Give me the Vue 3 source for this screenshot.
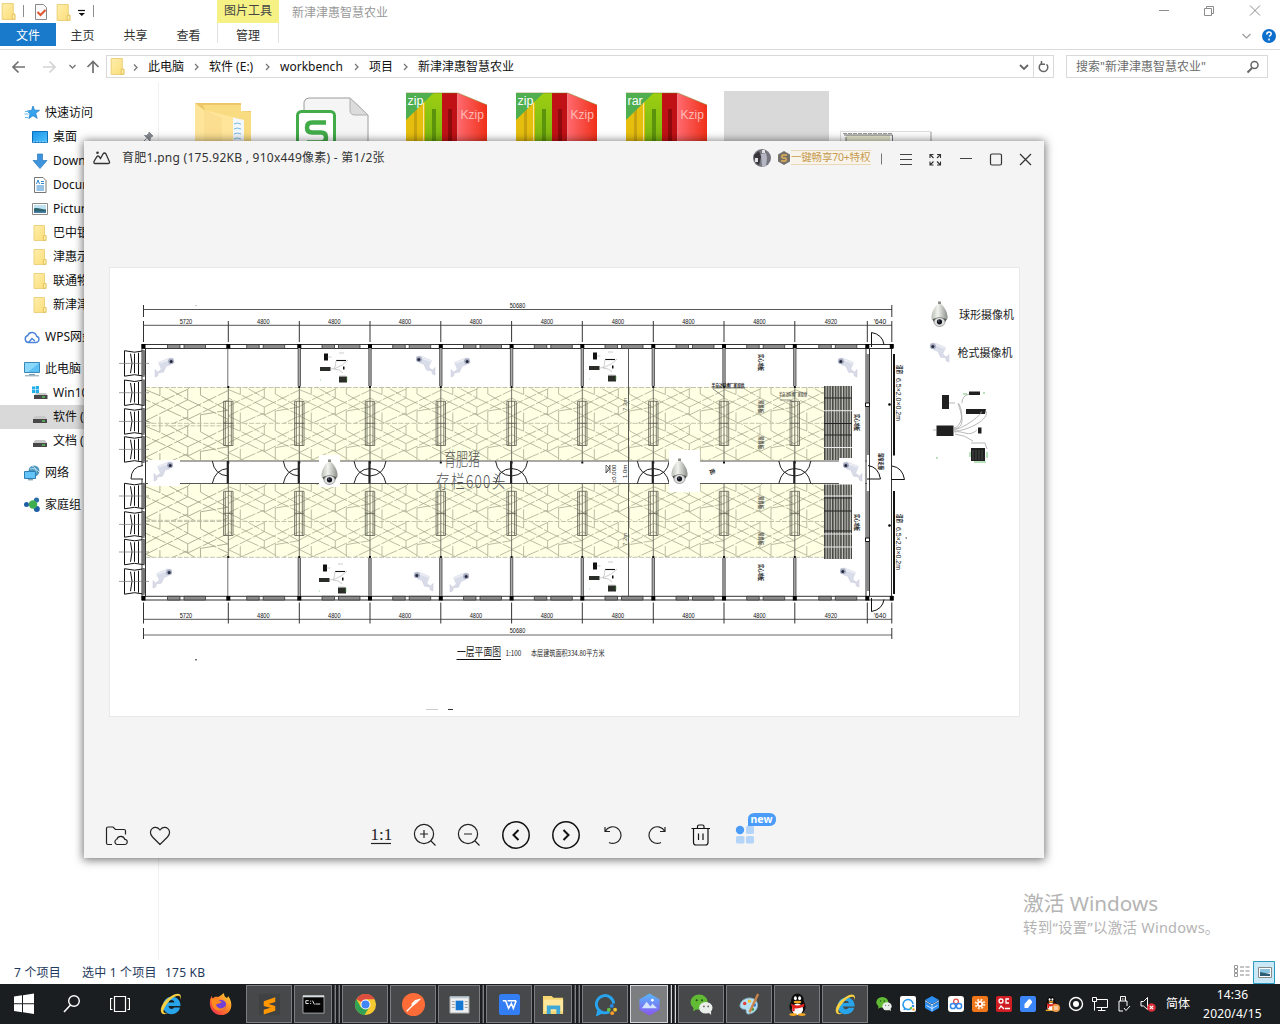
<script setup>
const navItems = [
  { icon: 'star', text: '快速访问', top: true },
  { icon: 'desk', text: '桌面', pin: true },
  { icon: 'down', text: 'Downloads' },
  { icon: 'docu', text: 'Documents' },
  { icon: 'pict', text: 'Pictures' },
  { icon: 'folder', text: '巴中银行' },
  { icon: 'folder', text: '津惠示范' },
  { icon: 'folder', text: '联通物联' },
  { icon: 'folder', text: '新津津惠' },
  { icon: 'cloud', text: 'WPS网盘', top: true, gap: true },
  { icon: 'pc', text: '此电脑', top: true, gap: true },
  { icon: 'win', text: 'Win10 (C:)' },
  { icon: 'drive', text: '软件 (E:)', sel: true },
  { icon: 'drive', text: '文档 (F:)' },
  { icon: 'net', text: '网络', top: true, gap: true },
  { icon: 'home', text: '家庭组', top: true, gap: true },
]
const crumbs = [
  { t: '此电脑', w: 61 },
  { t: '软件 (E:)', w: 71 },
  { t: 'workbench', w: 89 },
  { t: '项目', w: 49 },
  { t: '新津津惠智慧农业', w: 110 },
]
const archives = ['zip', 'zip', 'rar']

const cols = [143.5, 228.3, 299.3, 370, 440.8, 511.6, 582.3, 653.3, 724, 794.8, 867.3, 891.8]
const dims = [
  [186, '5720'], [263.3, '4800'], [334.3, '4800'], [405, '4800'], [476, '4800'], [547, '4800'],
  [618, '4800'], [688.5, '4800'], [759.5, '4800'], [831, '4920'], [880, "'640"],
]
const inner = cols.slice(1, 10)
const wallWins = cols.slice(0, 10).flatMap((x, i) => {
  const o = i === 0 || i === 9 ? 24 : i === 1 ? 18.4 : 22.7
  return [[x + o, 12.5], [x + o + 16.5, 21.5]]
})
const fans = [350.7, 380, 408.7, 436.7, 483.3, 511.7, 539.3, 568.7]
const doors = [[228.3, 0], [299.3, 0], [370, 1], [511.6, 1], [653.3, 1], [794.8, 1]]
const guns = [
  [164, 367, 1], [163, 471, 1], [162, 578, 1], [460, 367, 1], [459, 582, 1],
  [426, 365, -1], [848, 367, -1], [853, 471, -1], [424, 581, -1], [850, 577, -1], [940, 352, -1],
]
const domes = [[329.5, 472], [679.5, 471], [939.5, 314]]
const kits = [[334, 367], [603, 366], [333, 578], [603, 576]]
const meshes = []
cols.slice(0, 10).forEach((x, i) => {
  const end = i === 9 ? 824 : cols[i + 1]
  const start = i === 0 ? 146 : x
  for (const y of [387, 423.6, 484, 520.6]) meshes.push({ x: start, y, w: end - start, h: 36.6 })
})
const slab = [[761, 354], [761, 564], [857, 414], [857, 514]]
const slat = [[761, 400], [761, 436], [761, 496], [761, 532]]

const tasks = [
  { i: 'sublime' }, { i: 'cmd', n: 2 }, { i: 'chrome' }, { i: 'postman' }, { i: 'appwin', n: 1 }, { i: 'wps' },
  { i: 'files', n: 2 }, { i: 'wecom' }, { i: 'viewer', n: 2, on: true }, { i: 'wechat' }, { i: 'paint' }, { i: 'qq' }, { i: 'ie' },
]
const tray = ['wechat', 'tq', 'tstack', 'tcloud', 'tgear', 'tred', 'tblue', 'qq', 'trec', 'tnet', 'tusb', 'tmute']
</script>

<template>
  <div class="screen">
    <svg class="defs" width="0" height="0">
      <defs>
        <linearGradient id="gf" x1="0" y1="0" x2="1" y2="1"><stop offset="0" stop-color="#ffefac" /><stop offset="1" stop-color="#fbdc78" /></linearGradient>
        <linearGradient id="gb" x1="0" y1="0" x2="1" y2="1"><stop offset="0" stop-color="#1a92e8" /><stop offset="1" stop-color="#4fc3fb" /></linearGradient>
        <linearGradient id="gr" x1="0" x2="1"><stop offset="0" stop-color="#ff6a70" /><stop offset="1" stop-color="#f03018" /></linearGradient>
        <linearGradient id="gg" x1="0" y1="0" x2="0" y2="1"><stop offset="0" stop-color="#9ccf12" /><stop offset="1" stop-color="#76b010" /></linearGradient>
        <linearGradient id="gv" x1="0" y1="0" x2="0" y2="1"><stop offset="0" stop-color="#58b8fb" /><stop offset="1" stop-color="#8a55f0" /></linearGradient>
        <linearGradient id="gd" x1="0" x2="1"><stop offset="0" stop-color="#b9bcb5" /><stop offset=".4" stop-color="#f2f3ee" /><stop offset="1" stop-color="#8b8e88" /></linearGradient>
        <linearGradient id="gff" x1="1" y1="0" x2="0" y2="1"><stop offset="0" stop-color="#ffe03a" /><stop offset=".5" stop-color="#ff7a25" /><stop offset="1" stop-color="#f0205a" /></linearGradient>
      </defs>
      <symbol id="folder" viewBox="0 0 16 16"><path d="M2 .5h10.500v10l1.500 0v5H2z" fill="url(#gf)" stroke="#e9ca6d" stroke-width=".8" /><path d="M11.500 10.500h2.500v4.800h-2.500z" fill="#fff0ae" stroke="#e0bd55" stroke-width=".8" /></symbol>
      <symbol id="star" viewBox="0 0 16 16"><path d="M9 1l1.600 4.200 4.900.1-3.800 3 1.500 5-4.200-2.600-4.200 2.900 1.300-4.900L3 6l4.500-.6z" fill="#35a3ee" stroke="#1878c8" stroke-width=".7" /><path d="M1 6.500h4M.5 9h4M1 12.500h3" stroke="#62b8f2" stroke-width="1" /></symbol>
      <symbol id="desk" viewBox="0 0 16 16"><path d="M.5 2.500h15v11H.5z" fill="url(#gb)" stroke="#0e6fb8" /><path d="M1 12.800h14" stroke="#8bd2fb" stroke-dasharray="2 1" /></symbol>
      <symbol id="down" viewBox="0 0 16 16"><path d="M5.500 1h5v6.500h4.500L8 15.500 1 7.500h4.500z" fill="#3d94dc" stroke="#2a78ba" stroke-width=".7" /></symbol>
      <symbol id="docu" viewBox="0 0 16 16"><path d="M2.500.5h8.500l3 3v12H2.500z" fill="#fff" stroke="#777" /><path d="M9 4.500h3M9 6.500h3M4.500 9h7.500M4.500 11h7.500M4.500 13h7.500M4.500 7l1.500-4 1.500 4" stroke="#2f86cc" fill="none" /></symbol>
      <symbol id="pict" viewBox="0 0 16 16"><path d="M.5 2.500h15v11H.5z" fill="#fff" stroke="#8a8a8a" /><path d="M2 4h12v8H2z" fill="#bfe2f3" /><path d="M2 7.500c4-1.500 7 1 12 1V12H2z" fill="#2c6470" /><path d="M2 10.500h12V12H2z" fill="#4a7fa8" /></symbol>
      <symbol id="cloud" viewBox="0 0 16 16"><path d="M4.500 13.500h7.500a3.200 3.200 0 0 0 .5-6.300A4.600 4.600 0 0 0 3.700 6.500 3.600 3.600 0 0 0 4.500 13.500l3.500-4 3 2.500" fill="none" stroke="#4a83d8" stroke-width="1.400" /></symbol>
      <symbol id="pc" viewBox="0 0 16 16"><path d="M.5 1.500h15v10H.5z" fill="#5cc0f5" stroke="#3b87b5" /><path d="M1 2h14L4 11H1z" fill="#8cd8fb" /><path d="M5 13.500h6M1 14.800h14" stroke="#7c9cae" /></symbol>
      <symbol id="drive" viewBox="0 0 16 16"><path d="M3 7h10l2 3H1z" fill="#c8c8c8" /><path d="M1 10h14v4H1z" fill="#484848" /><path d="M10 12h3" stroke="#5fe05f" stroke-width="1.200" /></symbol>
      <symbol id="win" viewBox="0 0 16 16"><path d="M0 1.500h3v3H0zM3.600 1h3.400v3.500H3.600zM0 5h3v3H0zM3.600 5H7v3.500H3.600z" fill="#22aee8" /><path d="M5 8h9l1.500 2.500H2z" fill="#c8c8c8" /><path d="M2 10h13.500v4H2z" fill="#484848" /><path d="M10 12h3" stroke="#5fe05f" stroke-width="1.200" /></symbol>
      <symbol id="net" viewBox="0 0 16 16"><circle cx="10" cy="6" r="5.500" fill="#4a95bd" /><path d="M8 1c4 1 5 5 3 9M6 4c4-1 7 0 9 3" stroke="#c4e6f5" fill="none" /><path d="M.5 6.500h11v7H.5z" fill="#62c4f8" stroke="#2f7fb4" /><path d="M4 14.800h5" stroke="#5b7f95" /></symbol>
      <symbol id="home" viewBox="0 0 16 16"><circle cx="2.500" cy="7.500" r="2.500" fill="#1c5fa4" /><circle cx="12.500" cy="3" r="2.600" fill="#2b6cab" /><circle cx="12.800" cy="12" r="3" fill="#1c5fa4" /><circle cx="9" cy="7.500" r="4.200" fill="#3fae4e" /></symbol>

      <symbol id="gun" viewBox="-12 -12 24 24" overflow="visible"><path d="M-9 2.500v7.500l2.600-1 .8-3.200 5-.6 2.400-5.400-2.500-1L-4 3.500-6.500 5z" fill="#dadbe8" stroke="#c5c7d8" stroke-width=".5" /><path d="M-5.500-4.500L5-9l4.500.5.2 4.200L-3 1.500z" fill="#eceef6" stroke="#d0d2df" stroke-width=".5" /><path d="M-3 1.500L7-2 6-7-5-3z" fill="#d9dce9" /><circle cx="7" cy="-5.800" r="2.900" fill="#a6abc0" /><circle cx="7.200" cy="-5.500" r="1.500" fill="#23283a" /></symbol>
      <symbol id="dome" viewBox="-10 -14 20 28" overflow="visible"><path d="M-1.500-12.500h3v3h-3z" fill="#8c8f88" /><path d="M-1.500-10C-6-6-8.500 0-8 4.500-7 9 7 9 8 4.500 8.500 0 6-6 1.500-10z" fill="url(#gd)" /><path d="M-7 5.500C-5 3 5 3 7 5.500L5.500 8H-5.500z" fill="#50544f" /><ellipse cx="0" cy="8" rx="5.500" ry="4.500" fill="#dedfe0" stroke="#777" stroke-width=".6" /><circle cx="0" cy="7.800" r="2.600" fill="#15171d" /><circle cx="-.7" cy="7" r=".6" fill="#aebbe8" /></symbol>
      <symbol id="kit" viewBox="-15 -15 30 30" overflow="visible"><path d="M-10-13.500h4v7h-4z" fill="#111" /><path d="M-14 0h10.500v4H-14zM5 9.500h8v6H5z" fill="#2a2c28" /><path d="M9-.5h1.500v3H9z" fill="#111" /><path d="M2-6.500h10" stroke="#111" stroke-width="1.100" fill="none" /><path d="M-6.500-10h4M-3 2C4 2 0-6 3-7M14-7Q10-2 0 2q6 0 9 4M5 9h7M5-14h5" stroke="#999" stroke-width=".5" fill="none" /><path d="M13 10v4M-14 13h1" stroke="#5ab860" stroke-width=".6" /></symbol>

      <symbol id="ie" viewBox="0 0 24 24"><path d="M21 15.500h-6c-.5 2-5 2.300-5.500-1.500h12c.5-12-17-12.500-17.500-.5 0 11 15 11.500 17 2zM9.500 10.500c.5-3.300 5.500-3.300 6 0z" fill="#28a5ea" fill-rule="evenodd" /><path d="M21.500 8c2-7-3-8-9-4C3 9-1 20 4 22c2 .5 4-.5 5.500-1.500-6 2.500-6.500-2-2-8 4-5.500 8-8.500 11.500-8.700 2.200 0 2.800 1.500 2.500 4.200z" fill="#f6cf45" /></symbol>
      <symbol id="firefox" viewBox="0 0 24 24"><path d="M15 1c0 3 1 4 3 5 1-1 1-2 1-2 6 7 4 19-7 19C4 23 0 16 1 9c0-2 1-4 2-5 0 1 0 2 1 2.500C6 4 8 5 9 5c3-1 4-3 6-4z" fill="url(#gff)" /><circle cx="12" cy="13" r="5.200" fill="#7540d8" /><path d="M2 7c6-1 8 2 11 3-2 2-5 1-6 3 2 5 8 4 10 0 0 7-12 8-14 0z" fill="#ff8a20" /></symbol>
      <symbol id="sublime" viewBox="0 0 24 24"><path d="M1 1h22v22H1z" fill="#404142" /><path d="M6 8.500l12-4v5l-7 2 7 2v5l-12 4v-5l7-2-7-2z" fill="#ff9800" /></symbol>
      <symbol id="cmd" viewBox="0 0 24 24"><path d="M1 3h22v18H1z" fill="#050505" stroke="#a5a9ad" /><path d="M1 3.500h22" stroke="#d8dcdf" stroke-width="2" /><path d="M7 8H4v3h3M9 8v1M9 10.500v1M11 8l2 4M14 11.500h5" stroke="#eee" fill="none" /></symbol>
      <symbol id="chrome" viewBox="0 0 24 24"><circle cx="12" cy="12" r="11" fill="#f6c931" /><path d="M12 12L2.500 6.500A11 11 0 0 1 21.600 6.500H12z" fill="#dd4d40" /><path d="M12 12L7 14.500 2.500 6.500a11 11 0 0 0 8.500 16.500l5-8.500z" fill="#2fa253" /><circle cx="12" cy="12" r="5.200" fill="#fff" /><circle cx="12" cy="12" r="4.200" fill="#4285f4" /></symbol>
      <symbol id="postman" viewBox="0 0 24 24"><circle cx="12" cy="12" r="12" fill="#ff6c37" /><path d="M5 19l9-9 4-3M9 15l6-5 3-3-4 1-4 4" stroke="#fff" stroke-width="1.300" fill="none" /></symbol>
      <symbol id="appwin" viewBox="0 0 24 24"><path d="M2 4h20v17H2z" fill="#f0f0f0" stroke="#999" /><path d="M2 4.500h20" stroke="#b9c8d2" stroke-width="2" /><path d="M8 8h8v10H8z" fill="#1577d2" /><path d="M4 9h3M4 12h3M4 15h3M17.500 9h3M17.500 12h3M17.500 15h3" stroke="#999" /></symbol>
      <symbol id="wps" viewBox="0 0 24 24"><rect x="1" y="1" width="22" height="22" rx="3" fill="#347ef5" /><path d="M5 8h3l3 8 3-5 2 5 3-8M10 8h9" stroke="#fff" stroke-width="1.600" fill="none" /></symbol>
      <symbol id="files" viewBox="0 0 24 24"><path d="M1 3h9l2 2h10v17H1z" fill="#f6d673" /><path d="M2 7h20v12H2z" fill="#ffe79b" /><path d="M5 22v-9h14v9h-4v-5H9v5z" fill="#3ea9d8" /></symbol>
      <symbol id="wecom" viewBox="0 0 24 24"><path d="M16 19.500A9 9 0 1 1 20.500 11M5 18l-1 4 4-2" stroke="#28a4ee" stroke-width="3" fill="none" /><circle cx="18.500" cy="13.500" r="2" fill="#2d8bea" /><circle cx="15.500" cy="17.500" r="2" fill="#67c344" /><circle cx="19" cy="21" r="2" fill="#fb9a2c" /><circle cx="22" cy="17.500" r="2" fill="#f5c52e" /></symbol>
      <symbol id="viewer" viewBox="0 0 24 24"><path d="M12 .5l10.500 6v11L12 23.500l-10.500-6v-11z" fill="url(#gv)" /><path d="M4 16l5-7 4 5 2-3 5 5z" fill="#d4e6ff" /><circle cx="15" cy="7.500" r="1.400" fill="#fff" /></symbol>
      <symbol id="wechat" viewBox="0 0 24 24"><ellipse cx="9.500" cy="9.500" rx="9" ry="8" fill="#62bb35" /><path d="M4 15l-1 4 5-2.500" fill="#62bb35" /><ellipse cx="16.500" cy="15.500" rx="7" ry="6" fill="#e9eeea" /><path d="M19 20l3 3v-4" fill="#e9eeea" /><circle cx="7" cy="7.500" r="1.100" fill="#254d17" /><circle cx="12.500" cy="7.500" r="1.100" fill="#254d17" /><circle cx="14.500" cy="14" r=".9" fill="#666" /><circle cx="19" cy="14" r=".9" fill="#666" /></symbol>
      <symbol id="paint" viewBox="0 0 24 24"><path d="M2 13C3 6 12 3 18 7c5 5 2 14-7 15-4 0-1-5-4-5-2 0-5-1-5-4z" fill="#b5dff3" stroke="#7ea8bd" /><circle cx="7" cy="11" r="1.800" fill="#e04038" /><circle cx="12" cy="8.500" r="1.800" fill="#f0bf30" /><circle cx="15" cy="17" r="1.800" fill="#43a047" /><circle cx="17" cy="12.500" r="1.800" fill="#2b6cd0" /><path d="M21 1L12 20" stroke="#c8844a" stroke-width="2.500" /></symbol>
      <symbol id="qq" viewBox="0 0 24 24"><ellipse cx="12" cy="14" rx="8.500" ry="8.500" fill="#0c0c0c" /><ellipse cx="12" cy="7.500" rx="6.500" ry="7" fill="#0c0c0c" /><ellipse cx="12" cy="17" rx="5.800" ry="6" fill="#fff" /><ellipse cx="9.800" cy="5.500" rx="1.500" ry="2" fill="#fff" /><ellipse cx="14.200" cy="5.500" rx="1.500" ry="2" fill="#fff" /><ellipse cx="12" cy="9.300" rx="4" ry="1.300" fill="#f7a823" /><path d="M5 11q7 4 14 0v3q-7 3-10 2v3H6.500v-4z" fill="#e32020" /><ellipse cx="7.500" cy="22.500" rx="4" ry="1.500" fill="#f7a823" /><ellipse cx="16.500" cy="22.500" rx="4" ry="1.500" fill="#f7a823" /></symbol>
      <symbol id="tqq" viewBox="0 0 24 24"><use href="#qq" x="-1" y="0" width="23" height="23" /><circle cx="18" cy="18" r="6" fill="#f39a4a" /><path d="M15 16.500h6M15 19.500h6" stroke="#fff" stroke-width="1.400" /></symbol>
      <symbol id="tq" viewBox="0 0 16 16"><rect width="16" height="16" rx="2" fill="#fff" /><path d="M11 12.500A5 5 0 1 1 13 8M5 12l-1 2" stroke="#2a9bf0" stroke-width="1.600" fill="none" /><circle cx="13" cy="10" r="1.300" fill="#3c8fe8" /><circle cx="11" cy="12" r="1.200" fill="#6bc848" /><circle cx="13.500" cy="13.500" r="1.200" fill="#fa9c30" /></symbol>
      <symbol id="tstack" viewBox="0 0 16 16"><path d="M8 0l7 4-7 4-7-4zM1 5.500L8 9.500l7-4V12l-7 4-7-4z" fill="#2b8df0" /><path d="M1 4.800l7 4 7-4M8 9v6M2.500 9.500L8 12.500l5.500-3" stroke="#cfe6ff" fill="none" /></symbol>
      <symbol id="tcloud" viewBox="0 0 16 16"><rect width="16" height="16" rx="3" fill="#fff" /><circle cx="8" cy="5.500" r="2.400" fill="none" stroke="#e8504a" stroke-width="1.300" /><circle cx="5" cy="10" r="2.600" fill="none" stroke="#3187ea" stroke-width="1.500" /><circle cx="11" cy="10" r="2.600" fill="none" stroke="#3187ea" stroke-width="1.500" /></symbol>
      <symbol id="tgear" viewBox="0 0 16 16"><rect width="16" height="16" rx="2" fill="#f0761b" /><circle cx="8" cy="8" r="4" fill="none" stroke="#ffe8c9" stroke-width="2.600" stroke-dasharray="1.800 1.340" /><circle cx="8" cy="8" r="3" fill="#fff" /><circle cx="8" cy="8" r="1.300" fill="#e24b10" /></symbol>
      <symbol id="tred" viewBox="0 0 16 16"><rect width="16" height="16" rx="2" fill="#d01f24" /><circle cx="5" cy="5" r="2" stroke="#fff" stroke-width="1.300" fill="none" /><path d="M13 3h-3v4h3M3 13l2-3 3 3M9 12.500h5" stroke="#fff" stroke-width="1.300" fill="none" /></symbol>
      <symbol id="tblue" viewBox="0 0 16 16"><rect width="16" height="16" rx="2" fill="#3c87f7" /><path d="M4.500 12V8l4.500-5q3 1 3 3.500l-4 5.500z" fill="#fff" /></symbol>
      <symbol id="trec" viewBox="0 0 16 16"><circle cx="8" cy="8" r="6.500" fill="none" stroke="#fff" stroke-width="1.400" /><circle cx="8" cy="8" r="3" fill="#fff" /></symbol>
      <symbol id="tnet" viewBox="0 0 16 16"><path d="M4 3.500h11.500v8H4.500M9.500 11.500v3M6 14.500h7.500M.5 1.500h4v4h-4zM2.500 5.500v9" stroke="#fff" fill="none" /></symbol>
      <symbol id="tusb" viewBox="0 0 16 16"><path d="M3 15V5h8v5M4.500 5V.5h5V5M3 15h4M6.500 2.500v1M8 2.500v1" stroke="#fff" fill="none" /><path d="M8 12l2 2.500 4-4.500" stroke="#fff" fill="none" /></symbol>
      <symbol id="tmute" viewBox="0 0 16 16"><path d="M1 5.500h2.500L7.500 1.500v12L3.500 10H1z" stroke="#fff" fill="none" /><circle cx="11.500" cy="11.500" r="4.300" fill="#d83038" /><path d="M9.800 9.800l3.400 3.400M13.200 9.800l-3.400 3.400" stroke="#fff" stroke-width="1.200" /></symbol>
    </svg>

    <header class="title">
      <svg class="quick" width="217" height="23">
        <use href="#folder" x="0" y="3" width="17" height="17" /><use href="#folder" x="55" y="4" width="17" height="17" />
        <path d="M23.500 5v12M93.500 5v12" stroke="#8d8d8d" />
        <path d="M35.500 4.500h8l3 3v12h-11z" fill="#f9f9fb" stroke="#8a8a8a" /><path d="M37.500 12l3 3 5-5" stroke="#e0562c" stroke-width="2" fill="none" />
        <path d="M78 10.500h7" stroke="#111" stroke-width="1.200" /><path d="M78.500 13h6.500l-3.200 3z" fill="#111" />
      </svg>
      <div class="ctx">图片工具</div>
      <div class="name">新津津惠智慧农业</div>
      <svg class="winbtns" width="130" height="23"><path d="M9 10.500h10M54.500 8.500h7v7h-7zM56.500 8.500v-2h7v7h-2M100 5.500l10 10M110 5.500l-10 10" stroke="#8d8d8d" fill="none" /></svg>
    </header>
    <div class="tabs">
      <div class="tab file">文件</div><div class="tab t1">主页</div><div class="tab t2">共享</div><div class="tab t3">查看</div><div class="tab manage">管理</div>
      <svg class="help" width="44" height="26"><path d="M6.500 11l4 4 4-4" stroke="#999" fill="none" stroke-width="1.200" /><circle cx="33" cy="13" r="7" fill="#0c6fcb" /><path d="M30.800 11.500q0-2.500 2.200-2.500t2.200 2q0 1-2.200 2.500M33 15.500v2" stroke="#fff" stroke-width="1.500" fill="none" /></svg>
    </div>
    <div class="addr">
      <svg width="106" height="32"><path d="M25 17H13.500M18.500 11.500L13 17l5.500 5.500M93 23V11.500M87.500 17L93 11.500l5.500 5.500" stroke="#717171" stroke-width="1.700" fill="none" /><path d="M43 17h11.500M49.500 11.500L55 17l-5.500 5.500" stroke="#d4d4d4" stroke-width="1.700" fill="none" /><path d="M69.500 15l3 3 3-3" stroke="#777" stroke-width="1.400" fill="none" /></svg>
      <div class="path">
        <svg class="lead" width="29" height="20"><use href="#folder" x="2" y="1" width="17" height="17" /><path d="M27 7.500l3 3-3 3" stroke="#777" fill="none" stroke-width="1.300" /></svg>
        <div v-for="(c, i) in crumbs" :key="i" class="crumb" :style="{ width: c.w + 'px' }">
          <span>{{ c.t }}</span>
          <svg v-if="i < 4" width="6" height="8"><path d="M1 1l3 3-3 3" stroke="#777" fill="none" stroke-width="1.300" /></svg>
        </div>
        <svg class="pathend" width="36" height="21"><path d="M3 9l4 4 4-4" stroke="#666" stroke-width="1.800" fill="none" /><path d="M16.500 0v21" stroke="#d9d9d9" /><path d="M24 7.800a4.300 4.300 0 1 0 5.500.4M24.500 5v3.200h3.500" stroke="#666" stroke-width="1.500" fill="none" /></svg>
      </div>
      <div class="search"><span>搜索"新津津惠智慧农业"</span><svg width="14" height="14"><circle cx="8.500" cy="5" r="3.500" fill="none" stroke="#666" stroke-width="1.500" /><path d="M6 8l-4.500 4.500" stroke="#666" stroke-width="2" /></svg></div>
    </div>

    <div class="body">
      <nav>
        <div v-for="(n, i) in navItems" :key="i" class="nav" :class="{ top: n.top, gap: n.gap, sel: n.sel }">
          <svg width="16" height="16"><use :href="'#' + n.icon" width="16" height="16" /></svg>
          <span>{{ n.text }}</span>
          <svg v-if="n.pin" class="pin" width="12" height="12"><path d="M7 1l4 4-1.500.5L8 8v2L2.500 4.500h2L7 2.500zM4.500 7.500L1 11" fill="#868c92" stroke="#868c92" /></svg>
        </div>
      </nav>
      <div class="files">
        <div class="tile"><svg width="105" height="60"><path d="M21 12h46v8h10v40H21z" fill="#eec66a" /><path d="M29 14h38v6l10 1v40H45z" fill="#f9dc82" /><path d="M57 26l13 3v31H57z" fill="#f3f8fc" /><path d="M60 33q3-2 7 0M60 38q3-2 7 0M60 43q3-2 7 0M60 48q3-2 7 0" stroke="#78b8e0" fill="none" /><path d="M21 12l9 7 29 7v34H21z" fill="#ffe59a" /><path d="M30 19l18 8v33H30z" fill="#f8d989" opacity=".55" /></svg></div>
        <div class="tile"><svg width="105" height="60"><path d="M20 60V11q1-4 5-4h41l18 17v36z" fill="#f5f5f5" stroke="#9c9c9c" /><path d="M66 7v12q0 5 5 5h13z" fill="#dcdcdc" stroke="#b0b0b0" /><rect x="13.500" y="20.500" width="37" height="45" rx="4" fill="#fff" stroke="#42ac49" stroke-width="3" /><path d="M42 31.500H28q-5 0-5 5t5 5h9q5 0 5 5t-5 5H23" stroke="#42ac49" stroke-width="4.500" fill="none" /></svg></div>
        <div v-for="(a, i) in archives" :key="i" class="tile"><svg width="105" height="60">
          <path d="M12 2h37v58H12z" fill="#e6be0e" /><path d="M20 2h3v58h-3z" fill="#c9a30f" /><path d="M29 2h1v58h-1z" fill="#f6e89a" /><path d="M31 2h17v58H31z" fill="url(#gg)" /><path d="M38 18h4v42h-4z" fill="#5c930d" /><path d="M48 2h15.500v58H48z" fill="#c01216" /><path d="M54 18h4v42h-4z" fill="#8e0a0c" /><path d="M63.500 2L93 14v46H63.500z" fill="url(#gr)" /><path d="M12 2h52l29 12" fill="none" stroke="#81700e" stroke-opacity=".5" /><path d="M12 2h27.500L12 29z" fill="#4fae50" />
          <text x="13.500" y="14" class="ext">{{ a }}</text><text x="66.500" y="28" class="kz">Kzip</text>
        </svg></div>
        <div class="tile picked"></div>
        <div class="tile"><svg width="105" height="60"><path d="M6.500 40.500H97V60H6.500z" fill="#fff" stroke="#ddd" /><path d="M97 41v19" stroke="#aaa" /><path d="M12 44h44v16H12z" fill="#e4e5cb" /><path d="M9 42.500h50" stroke="#999" stroke-dasharray="4 1" /><path d="M10 44h48.500v16M12 46v14" stroke="#777" fill="none" /></svg></div>
      </div>
    </div>

    <footer class="status">
      <span class="s1">7 个项目</span><span class="s2">选中 1 个项目</span><span class="s3">175 KB</span>
      <svg class="views" width="46" height="24"><path d="M1.500 5.500h3v3h-3zM1.500 9.500h3v3h-3zM1.500 13.500h3v3h-3z" stroke="#999" fill="none" /><path d="M7 7h10M7 11h10M7 15h10" stroke="#888" stroke-dasharray="4 1.500" /><path d="M20.500 1.500h21v22h-21z" fill="#cbe8f6" stroke="#2c9bc4" /><path d="M25.500 7.500h13v10h-13z" fill="#fff" stroke="#888" /><path d="M27 9h10v4H27z" fill="#8cc4df" /><path d="M27 12l10 2v2H27z" fill="#2d5d75" /></svg>
    </footer>

    <div class="taskbar">
      <div class="sys"><svg width="20" height="22"><path d="M0 3.500l8-1.200v8H0zM9 2.200L20 .5v9.800H9zM0 11.200h8v8l-8-1.200zM9 11.200h11V21L9 19.300z" fill="#fff" /></svg></div>
      <div class="sys"><svg width="20" height="20"><circle cx="12" cy="7" r="5.300" fill="none" stroke="#fff" stroke-width="1.400" /><path d="M8.500 11L2 18" stroke="#fff" stroke-width="1.500" /></svg></div>
      <div class="sys"><svg width="20" height="18"><path d="M4.500 1.500h11v15h-11zM2.500 3.500H.5v11h2M17.500 3.500h2v11h-2" fill="none" stroke="#fff" stroke-width="1.200" /></svg></div>
      <div class="sys ico"><svg width="24" height="24"><use href="#ie" width="24" height="24" /></svg></div>
      <div class="sys ico"><svg width="24" height="24"><use href="#firefox" width="24" height="24" /></svg></div>
      <div class="apps">
        <div v-for="(t, i) in tasks" :key="i" class="slot">
          <div class="app" :class="{ on: t.on }"><svg width="23" height="23"><use :href="'#' + t.i" width="23" height="23" /></svg></div>
          <i v-for="k in t.n || 0" :key="k" class="stack" :class="{ on: t.on }"></i>
        </div>
      </div>
      <div class="tray"><div v-for="(t, i) in tray" :key="i" class="tcell"><svg width="16" height="16"><use :href="t === 'qq' ? '#tqq' : '#' + t" width="16" height="16" /></svg></div></div>
      <div class="ime">简体</div>
      <div class="clock"><span>14:36</span><span>2020/4/15</span></div>
    </div>

    <div class="mark"><p class="m1">激活 Windows</p><p class="m2">转到“设置”以激活 Windows。</p></div>

    <section class="win">
      <div class="wbar">
        <svg width="18" height="14"><path d="M2 12.500Q.5 12.500 1 10.500L4 5.500q1-1 2 0l1.500 2L10 3q1.500-2 3 0l3.500 8q.5 1.500-1.500 1.500z" fill="none" stroke="#333" stroke-width="1.300" /><circle cx="4.500" cy="1.800" r="1.300" fill="#333" /></svg>
        <span class="fname">育肥1.png (175.92KB , 910x449像素) - 第1/2张</span>
        <svg class="ava" width="18" height="18"><circle cx="9" cy="9" r="9" fill="#75757d" /><path d="M1 6l5-4 2 6-2 8q-5-2-5-10z" fill="#38343a" /><path d="M8 5l5-1 1 5-1 8-4 1z" fill="#b5b6c3" /><path d="M9 1h3v3H9zM2 9h3v4H2z" fill="#e1e1e6" /></svg>
        <svg class="badge" width="14" height="16"><path d="M7 1l6 3.500v7L7 15l-6-3.500v-7z" fill="#75706a" /><path d="M10 5H5.500q-1.500 1.500 0 3h3q1.500 1.500 0 3H4" stroke="#e3b155" stroke-width="1.400" fill="none" /></svg>
        <span class="vip">一键畅享70+特权</span>
        <svg class="wbtns" width="170" height="24"><path d="M7.500 7.500v11" stroke="#777" /><path d="M26 8.500h12M26 13.500h12M26 18.500h12M86 12.500h12" stroke="#444" stroke-width="1.200" /><path d="M56 12V8.500h3.500M63 8.500h3.500V12M66.500 15.500V19H63M59.500 19H56v-3.500M56.500 9l3 3M66 9l-3 3M66 18.500l-3-3M56.500 18.500l3-3" stroke="#333" fill="none" stroke-width="1.100" /><rect x="116.500" y="8" width="11" height="11" rx="1.500" fill="none" stroke="#333" stroke-width="1.200" /><path d="M146 8l11 11M157 8l-11 11" stroke="#333" stroke-width="1.200" /></svg>
      </div>
      <div class="canvas">
        <svg class="plan" width="909" height="448" viewBox="110 268 909 448">
          <defs>
            <pattern id="slats" width="2.700" height="12.300" patternUnits="userSpaceOnUse" x="824" y="386"><path d="M0 0h2.700v12.300H0z" fill="#c6c6c0" /><path d="M0 0h1.500v12.300H0z" fill="#42423e" /></pattern>
            <symbol id="mesh" viewBox="0 0 71 36.600" preserveAspectRatio="xMinYMin slice"><path d="M0 2.500L12 7.500 36 20M0 19.500L12 13 36 2M12 0v7.500M36 2v9L17 0M36 11L0 29M36 20v8L0 11M0 29l16 7.600M12 25.500v11L36 26M36 28l14 8.600M36 2l2-2M36 20L71 3M36 11l35 17M36 28l35-17M47 7l24 13.500M47 0v7M47 24v12.600M47 24l24-4M71 29l-16 7.600" fill="none" stroke="#a0a086" stroke-width=".7" stroke-dasharray="13 1.500" /></symbol>
          </defs>
          <path d="M145 387h679v74H145zM145 483.500h679V557H145z" fill="#feffe3" />
          <use v-for="(m, i) in meshes" :key="'m' + i" href="#mesh" :x="m.x" :y="m.y" :width="m.w" :height="m.h" />
          <path d="M145 387.500h680M145 423.300h680M145 425.800h90M145 520.300h90M145 521.500h680M145 557.300h680" stroke="#b5b5a0" stroke-width=".8" stroke-dasharray="5 1.500" />
          <path d="M824 386h28v74h-28zM824 484.500h28V559h-28z" fill="url(#slats)" />
          <path d="M824 398h28M824 423.500h28M824 435h28M824 498h28M824 511h28M824 531h28" stroke="#222" stroke-width="1.200" /><path d="M824 410.700h28M824 447.500h28M824 496h28M824 534h28M824 547h28" stroke="#eee" />
          <path d="M143 309.500h749M143 325.300h749M143 619.300h749" stroke="#444" stroke-width=".9" /><path d="M143 635h749" stroke="#999" stroke-width="1.500" />
          <path d="M143.500 305v12M891.800 305v12M143.500 628v11M891.800 628v11" stroke="#333" />
          <path v-for="(x, i) in cols" :key="'t' + i" :d="`M${x} 321v21M${x} 602.500v21`" stroke="#333" />
          <g class="dim"><template v-for="(d, i) in dims" :key="i"><text :x="d[0]" y="323.700" textLength="12.500" lengthAdjust="spacingAndGlyphs">{{ d[1] }}</text><text :x="d[0]" y="617.700" textLength="12.500" lengthAdjust="spacingAndGlyphs">{{ d[1] }}</text></template><text x="517.500" y="308.200" textLength="15.500" lengthAdjust="spacingAndGlyphs">50680</text><text x="517.500" y="633.200" textLength="15.500" lengthAdjust="spacingAndGlyphs">50680</text></g>

          <path d="M142 344.500h751M142 348.500h751M142 596.300h751M142 600h751M142 344v256M145.500 348v248M866 348v248M869.500 348v248M891.500 346v252" stroke="#333" fill="none" />
          <path v-for="(w, i) in wallWins" :key="'w' + i" :d="`M${w[0]} 344.500h${w[1]}v4h-${w[1]}zM${w[0]} 596.300h${w[1]}v3.700h-${w[1]}z`" fill="#8c8c8c" stroke="#333" stroke-width=".8" />
          <path v-for="(x, i) in cols" :key="'q' + i" :d="`M${x - 2} 344h4v4.500h-4zM${x - 2} 596h4v4.500h-4z`" fill="#000" />
          <template v-for="(x, i) in inner" :key="'p' + i">
            <path v-if="i" :d="`M${x} 348v38M${x} 558v38`" stroke="#aaa" stroke-width="2.600" />
            <path :d="i ? `M${x - 1.2} 348v38M${x + 1.200} 348v38M${x - 1.200} 558v38M${x + 1.200} 558v38` : `M${x - .5} 348v38M${x - .5} 558v38`" stroke="#333" stroke-width=".7" />
            <path :d="`M${x} 386v76M${x} 483v75`" stroke="#66665c" stroke-width=".9" />
            <path :d="`M${x - 4.700} 401.300h9.400v44.200h-9.400zM${x - 3} 401.300v44M${x + 3} 401.300v44M${x - 4.700} 423.300h9.400M${x - 4.700} 491.300h9.400v44.200h-9.400zM${x - 3} 491.300v44M${x + 3} 491.300v44M${x - 4.700} 513.300h9.400`" fill="none" stroke="#5b5b4f" stroke-width=".8" />
            <path :d="`M${x - 1} 461.500h2v2h-2zM${x - 1} 386h2v2h-2zM${x - 1} 556h2v2h-2z`" fill="#111" />
          </template>
          <path d="M145 461h722M145 483.500h722" stroke="#555" /><path d="M628.500 348v248" stroke="#444" stroke-width=".9" />
          <template v-for="(d, i) in doors" :key="'d' + i">
            <path :d="`M${d[0] - .5} 461v22.500`" stroke="#222" stroke-width="2.200" />
            <path :d="`M${d[0] - 16} 461Q${d[0] - 14} 475 ${d[0]} 476M${d[0] - 16} 483.500Q${d[0] - 13} 469 ${d[0]} 468.500`" fill="none" stroke="#222" />
            <path v-if="d[1]" :d="`M${d[0] + 16} 461Q${d[0] + 14} 475 ${d[0]} 476M${d[0] + 16} 483.500Q${d[0] + 13} 469 ${d[0]} 468.500`" fill="none" stroke="#222" />
          </template>
          <g v-for="(y, i) in fans" :key="'f' + i" fill="none" stroke="#111"><path :d="`M124.500 ${y}v25.500M124.500 ${y}q10 3 20 0M124.500 ${y + 25.500}q10-3 20 0M130.500 ${y + 3}q3 9 0 19.500M134.500 ${y + 3}v19.500M138.500 ${y + 2}v22`" /><path :d="`M143.500 ${y}v25`" stroke="#777" stroke-width="3" /><path :d="`M119 ${y + 12.700}h30`" stroke="#777" stroke-width=".7" /></g>
          <path d="M143 479h-12q0-12 12-13.500" fill="#fff" stroke="#222" />
          <path d="M867.500 354v101M867.500 491v100" stroke="#888" stroke-width="3" /><path d="M865.500 403h4v3.500h-4zM865.500 538h4v3.500h-4z" fill="#fff" stroke="#111" />
          <path d="M894 354v101.500M894 491v103" stroke="#111" stroke-width="2" /><path d="M871.500 347v-14.500q11 2 12.500 12M871.500 598v13.500q11-2 12.500-12M867 479h13.500q-2-12-12.500-13.500M891.500 479.500h13q-2-12-12.500-13.500" fill="none" stroke="#111" />
          <circle cx="889.500" cy="404.500" r="1.300" /><circle cx="889.500" cy="525.500" r="1.300" />

          <path d="M148 460h32v26h-32zM319 455h21v32h-21zM669 450h31v42h-31zM839 458h26v26h-26z" fill="#fff" />
          <use v-for="(k, i) in kits" :key="'k' + i" href="#kit" :x="k[0] - 15" :y="k[1] - 15" width="30" height="30" />
          <g v-for="(g, i) in guns" :key="'g' + i" :transform="`translate(${g[0]} ${g[1]}) scale(${g[2]} 1)`"><use href="#gun" x="-12" y="-12" width="24" height="24" /></g>
          <use v-for="(g, i) in domes" :key="'o' + i" href="#dome" :x="g[0] - 10" :y="g[1] - 14" width="20" height="28" />

          <g class="cad">
            <text transform="translate(444 466) scale(.67 1)" font-size="18">育肥猪</text><text transform="translate(436 488) scale(.76 1)" font-size="18" letter-spacing="1.700">存栏600头</text>
            <text transform="translate(457 656) scale(.8 1)" font-size="11" class="dark">一层平面图</text>
            <text transform="translate(505.500 656) scale(.85 1)" font-size="7.500" class="dark">1:100</text>
            <text transform="translate(531 656) scale(.815 1)" font-size="7.500" class="dark">本层建筑面积334.80平方米</text>
          </g>
          <path d="M456.500 659.500h44.500" stroke="#111" stroke-width="1.200" />
          <g class="note">
            <text v-for="(s, i) in slab" :key="'s' + i" :transform="`translate(${s[0] - 2} ${s[1]}) rotate(90)`" textLength="17" lengthAdjust="spacingAndGlyphs">实心地板</text>
            <text v-for="(s, i) in slat" :key="'l' + i" :transform="`translate(${s[0] - 2} ${s[1]}) rotate(90)`" textLength="13" lengthAdjust="spacingAndGlyphs" opacity=".7">漏粪板</text>
            <text transform="translate(879 453) rotate(90)" textLength="17" lengthAdjust="spacingAndGlyphs">湿帘走廊</text>
            <text x="711.500" y="387" textLength="33" lengthAdjust="spacingAndGlyphs" font-size="4.500">半自动料槽厂家提供</text><text x="779" y="396" textLength="28" lengthAdjust="spacingAndGlyphs" font-size="4.500" opacity=".7">半自动料槽厂家提供</text>
            <text transform="translate(709 470) rotate(60)" font-size="6">走</text>
          </g>
          <path d="M712 388h33M713 389l11 8M780 400h10l4 2" stroke="#444" stroke-width=".6" fill="none" />
          <g class="vert">
            <text transform="translate(897 365) rotate(90)" class="bold" textLength="9" lengthAdjust="spacingAndGlyphs">湿帘</text><text transform="translate(895.500 378) rotate(90)" textLength="43" lengthAdjust="spacingAndGlyphs">6.5×2.0×0.2m</text>
            <text transform="translate(897 514) rotate(90)" class="bold" textLength="9" lengthAdjust="spacingAndGlyphs">湿帘</text><text transform="translate(895.500 527) rotate(90)" textLength="43" lengthAdjust="spacingAndGlyphs">6.5×2.0×0.2m</text>
            <g class="small"><text transform="translate(627 411) rotate(-90)" opacity=".7">7.2m</text><text transform="translate(627 478) rotate(-90)">1.0m</text><text transform="translate(627 546) rotate(-90)" opacity=".7">7.2m</text>
            <text transform="translate(616 483) rotate(-90)">±0.000</text></g>
          </g>
          <path d="M606 465v8M606 465l4 4-4 4 4-8v8" stroke="#333" stroke-width=".7" fill="none" />
          <path d="M195 305.500h2M426 709.500h12" stroke="#ccc" /><path d="M195 659.800h2M448 709.500h5M905.500 538h1.500" stroke="#333" />
          <text x="959" y="318.500" class="leg">球形摄像机</text><text x="957.500" y="356.500" class="leg">枪式摄像机</text>
          <path d="M942 395h7v14h-7zM969 391.500h11v3.500h-11zM966 409h20l-1 5h-19zM936.500 425.500h17v10.500h-17zM978 427.500h3.500v6H978zM971 448h14v13h-14z" fill="#202020" />
          <path d="M949 403h6M954 429c12-2 8-13 4-26M954 428c8-2 10-14 5-24M980 413c8-6-10 14-27 17M986 411c4 8-18 20-32 20M954 432c10-2 14 6 23-2M955 434q10 1 18 7M971 443h14l2 6M962 403q0-7 7-9M936 430h-3" fill="none" stroke="#999" stroke-width=".7" />
          <path d="M963 394h4M984 392v2M970 452v5M987 452v6M974 462h12M936 458h2" stroke="#52b858" stroke-width=".8" /><path d="M973 450v10M976 450v10M979 450v10M982 450v10" stroke="#454a42" />
        </svg>
      </div>
      <div class="tools">
        <svg width="960" height="50" viewBox="84 810 960 50" fill="none" stroke="#222" stroke-width="1.200">
          <path d="M112 844.500h-4q-1.500 0-1.500-1.500v-14.500q0-1.500 1.500-1.500h5l2.500 2.500h8.500q1.500 0 1.500 1.500v3.500" /><path d="M117 844.500h7.500a2.600 2.600 0 0 0 .3-5.200 4.200 4.200 0 0 0-8 0 2.700 2.700 0 0 0 .2 5.200z" />
          <path d="M160 844.500l-7.500-7.500c-6-6.500 2.500-13.500 7.500-7 5-6.500 13.500.5 7.500 7z" />
          <path d="M371 843.500h20" /><text x="370.500" y="840" class="ratio">1:1</text>
          <circle cx="424" cy="834" r="9.600" /><path d="M431 841l4.500 4.500M420 834h8M424 830v8" />
          <circle cx="468" cy="834" r="9.600" /><path d="M475 841l4.500 4.500M464 834h8" />
          <circle cx="516" cy="835" r="13.200" stroke="#111" stroke-width="1.500" /><path d="M518.500 830l-5 5 5 5" stroke="#111" stroke-width="2" />
          <circle cx="566" cy="835" r="13.200" stroke="#111" stroke-width="1.500" /><path d="M563.500 830l5 5-5 5" stroke="#111" stroke-width="2" />
          <path d="M605 827v4.500h5M605.500 831a8.300 8.300 0 1 1 3.500 11.500" /><path d="M665 827v4.500h-5M664.500 831a8.300 8.300 0 1 0-3.500 11.500" />
          <path d="M691.500 828.500h18.500M697.500 828v-1.500q0-1.500 1.500-1.500h3.500q1.500 0 1.500 1.500v1.500M693.500 829v13.500q0 2.500 2.500 2.500h9.500q2.500 0 2.500-2.500V829M698.500 833.500v6.500M703 833.500v6.500" stroke="#111" />
          <g stroke="none"><circle cx="740" cy="830" r="4.200" fill="#4a9cf8" /><path d="M738 836h5q1.500 0 1.500 1.500v4.500q0 1.500-1.500 1.500h-5q-2 0-2-1.500v-4.500q0-1.500 2-1.500zM747.500 836h5q1.500 0 1.500 1.500v4.500q0 1.500-1.500 1.500h-5q-1.500 0-1.500-1.500v-4.500q0-1.500 1.500-1.500zM747.500 826h5q1.500 0 1.500 1.500v5q0 1.500-1.500 1.500h-5q-1.500 0-1.500-1.500v-5q0-1.500 1.500-1.500z" fill="#b4d4fa" /><path d="M748 826v-6.500q0-6.500 6.500-6.500h15q6.500 0 6.500 6.500t-6.500 6.500z" fill="#4a9cf8" /><text x="750.500" y="822.800" class="new">new</text></g>
        </svg>
      </div>
    </section>
  </div>
</template>

<style>
body { background: #fff; }
</style>
<style scoped>
.screen { position: relative; width: 1280px; height: 1024px; overflow: hidden; display: flex; flex-direction: column; background: #fff; font: 12px/16px "Noto Sans", "Noto Sans CJK SC", sans-serif; color: #111; }
.defs { position: absolute; }
svg { display: block; flex: none; }
span, .tab, .ctx, .name { white-space: nowrap; }
.title { display: flex; height: 23px; flex: none; }
.ctx { width: 62px; background: #f5f184; text-align: center; line-height: 21px; color: #444; }
.name { margin-left: 13px; line-height: 25px; color: #999; }
.winbtns { margin-left: auto; }
.tabs { display: flex; height: 26px; flex: none; border-bottom: 1px solid #dadbdc; color: #333; line-height: 25px; }
.tab { text-align: center; }
.file { width: 56px; height: 23px; background: #1979ca; color: #fff; }
.t1 { width: 53px; } .t2 { width: 53px; } .t3 { width: 53px; }
.manage { width: 60px; margin-left: 2px; height: 20px; border: solid #e0e0e0; border-width: 0 1px; }
.help { margin-left: auto; }
.addr { display: flex; height: 32px; flex: none; }
.path { display: flex; align-items: center; box-sizing: border-box; width: 948px; height: 23px; margin-top: 5px; border: 1px solid #d9d9d9; }
.lead { overflow: visible; }
.crumb { display: flex; align-items: center; justify-content: space-between; box-sizing: border-box; padding-left: 12px; height: 20px; }
.crumb svg { margin-right: -3px; }
.pathend { margin-left: auto; }
.search { display: flex; align-items: center; justify-content: space-between; box-sizing: border-box; width: 202px; height: 23px; margin: 5px 0 0 12px; padding: 0 7px 0 9px; border: 1px solid #d9d9d9; color: #6d6d6d; }
.body { display: flex; flex: 1; min-height: 0; }
nav { width: 158px; padding-top: 19px; border-right: 1px solid #f0f0f0; flex: none; }
.nav { display: flex; align-items: center; height: 24px; padding-left: 32px; gap: 5px; overflow: hidden; }
.nav.top { padding-left: 24px; } .nav.gap { margin-top: 8px; } .nav.sel { background: #d9d9d9; }
.nav .pin { margin-left: 60px; }
.files { display: flex; gap: 5px; padding: 9px 0 0 15px; }
.tile { width: 105px; height: 60px; }
.picked { background: #d9d9d9; }
.ext { font: 12.500px "Liberation Sans", sans-serif; fill: #fff; }
.kz { font: 12px "Liberation Sans", sans-serif; fill: #ffb9b5; }
.status { display: flex; align-items: center; height: 24px; flex: none; padding: 0 1px 0 14px; color: #1e395b; letter-spacing: .2px; }
.status span { padding-top: 1px; }
.s1 { width: 68px; } .s2 { width: 83px; }
.views { margin-left: auto; }
.taskbar { display: flex; align-items: center; height: 40px; flex: none; background: #1b1e20; color: #fff; }
.sys { display: flex; justify-content: center; align-items: center; width: 48px; height: 40px; }
.sys.ico { width: 50px; padding-left: 1px; box-sizing: border-box; }
.sys.ico svg { margin-left: 2px; }
.apps { display: flex; margin-left: 2px; width: 626px; }
.slot { display: flex; width: 46px; height: 38px; margin-right: 2px; flex: none; gap: 2px; }
.app { flex: 1; display: flex; align-items: center; justify-content: center; background: #46484a; border: 1px solid #7c7e80; box-sizing: border-box; min-width: 0; }
.app.on { background: #7c7e80; border-color: #d5d6d7; }
.stack { width: 2px; box-sizing: border-box; border-right: 1px solid #7c7e80; background: #46484a; }
.stack.on { border-color: #d5d6d7; }
.tray { display: flex; }
.tcell { width: 24px; display: flex; justify-content: center; }
.ime { width: 36px; text-align: center; }
.clock { display: flex; flex-direction: column; align-items: center; width: 73px; line-height: 19px; padding-bottom: 1px; letter-spacing: .2px; }
.mark { position: absolute; left: 1023px; top: 890px; color: #b4b4b4; white-space: nowrap; }
.mark p { margin: 0; }
.m1 { font-size: 20.700px; line-height: 27px; }
.m2 { font-size: 14.500px; line-height: 21px; letter-spacing: .25px; }
.win { position: absolute; left: 84px; top: 141px; width: 960px; height: 717px; display: flex; flex-direction: column; background: #f4f4f4; box-shadow: 0 1px 9px 1px rgba(0, 0, 0, .55); }
.wbar { display: flex; align-items: center; height: 33px; padding: 0 0 2px 9px; color: #333; flex: none; box-sizing: content-box; }
.fname { margin-left: 11px; width: 631px; letter-spacing: .27px; }
.badge { margin-left: 6px; }
.vip { width: 80px; font-size: 10.500px; line-height: 13px; height: 15px; color: #c79b4e; letter-spacing: -.2px; border: solid #ead9b8; border-width: 1px 0; background: #f8f4ec; box-sizing: border-box; }
.wbtns { margin-left: 3px; }
.canvas { margin: 91px 0 0 25px; flex: none; width: 909px; border: 1px solid #e9e9e9; background: #fff; }
.plan text { stroke: none; }
.dim { font: 7.500px "Liberation Sans", sans-serif; text-anchor: middle; fill: #111; }
.cad { font-family: "Noto Sans CJK SC", sans-serif; font-weight: 300; fill: #555; }
.dark { fill: #222; font-weight: 400; }
.note { font: 700 5.500px "Noto Sans CJK SC", sans-serif; fill: #222; }
.vert { font: 8px "Liberation Sans", "Noto Sans CJK SC", sans-serif; fill: #222; }
.bold { font-weight: 700; font-size: 6.500px; }
.small { font-size: 6px; }
.leg { font: 11px "Noto Sans CJK SC", sans-serif; fill: #222; }
.tools { margin-top: 93px; height: 50px; flex: none; }
.ratio { font: 17px "Liberation Serif", serif; fill: #222; stroke: none; }
.new { font: 700 10.500px "Noto Sans", sans-serif; fill: #fff; }
</style>
